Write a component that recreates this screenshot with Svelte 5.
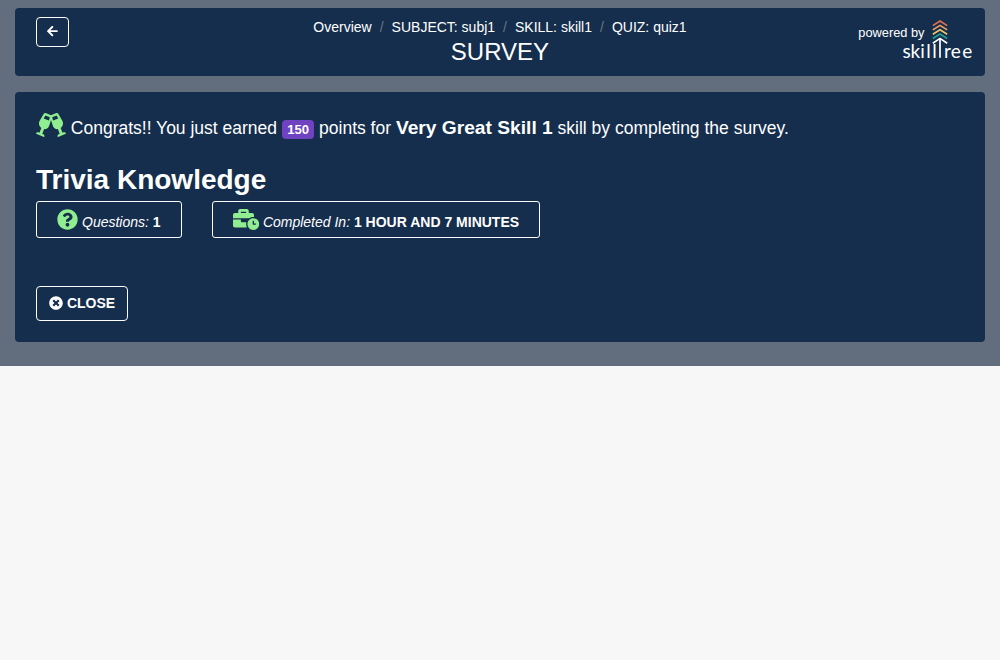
<script>
  const crumbs = ['Overview', 'SUBJECT: subj1', 'SKILL: skill1', 'QUIZ: quiz1'];
  const chevrons = ['#e76f51', '#f4a261', '#e9c46a', '#2a9d8f'];
  const icons = {
    back: [448, 'M257.5 445.1l-22.2 22.2c-9.4 9.4-24.6 9.4-33.9 0L7 273c-9.4-9.4-9.4-24.6 0-33.9L201.4 44.7c9.4-9.4 24.6-9.4 33.9 0l22.2 22.2c9.5 9.5 9.3 25-.4 34.3L136.6 216H424c13.3 0 24 10.7 24 24v32c0 13.3-10.7 24-24 24H136.6l120.5 114.8c9.8 9.3 10 24.8.4 34.3z'],
    cheers: [640, 'M639.4 433.6c-8.4-20.4-31.8-30.1-52.2-21.6l-22.1 9.2-38.7-101.9c47.9-35 64.8-100.3 34.5-152.8L474.3 16c-8-13.9-25.1-19.7-40-13.6L320 49.8 205.7 2.4c-14.9-6.1-32-.3-40 13.6L79.1 166.5C48.9 219 65.7 284.3 113.6 319.2L74.9 421.1l-22.1-9.2c-20.4-8.5-43.7 1.2-52.2 21.6-1.7 4.1.2 8.8 4.3 10.5l162.3 67.4c4.1 1.7 8.7-.2 10.4-4.3 8.4-20.4-1.4-43.8-21.6-52.3l-22.1-9.1L173 342.7c4.3.5 8.5 1.3 12.7 1.3 41.6 0 80.7-27.9 94.8-71.8L320 149.2l39.5 123c14.2 43.9 53.2 71.8 94.8 71.8 4.3 0 8.5-.8 12.8-1.3l39 102.9-22.1 9.1c-20.4 8.5-30.1 31.9-21.6 52.3 1.7 4.1 6.3 6 10.4 4.3L635.1 444c4-1.7 6-6.3 4.3-10.4zM275.9 162.1l-112.1-46.5 36.5-63.4 94.5 39.2-18.9 70.7zm88.2 0l-18.9-70.7 94.5-39.2 36.5 63.4-112.1 46.5z'],
    question: [512, 'M504 256c0 136.997-111.043 248-248 248S8 392.997 8 256C8 119.083 119.043 8 256 8s248 111.083 248 248zM262.655 90c-54.497 0-89.255 22.957-116.549 63.758-3.536 5.286-2.353 12.415 2.715 16.258l34.699 26.31c5.205 3.947 12.621 3.008 16.665-2.122 17.864-22.658 30.113-35.797 57.303-35.797 20.429 0 45.698 13.148 45.698 32.958 0 14.976-12.363 22.667-32.534 33.976C247.128 238.528 216 254.941 216 296v4c0 6.627 5.373 12 12 12h56c6.627 0 12-5.373 12-12v-1.333c0-28.462 83.186-29.647 83.186-106.667 0-58.002-60.165-102-116.531-102zM256 338c-25.365 0-46 20.635-46 46 0 25.364 20.635 46 46 46s46-20.636 46-46c0-25.365-20.635-46-46-46z'],
    time: [640, 'M496 224c-79.59 0-144 64.41-144 144s64.41 144 144 144 144-64.41 144-144-64.41-144-144-144zm64 150.29c0 5.34-4.37 9.71-9.71 9.71h-60.57c-5.34 0-9.71-4.37-9.71-9.71v-76.57c0-5.34 4.37-9.71 9.71-9.71h12.57c5.34 0 9.71 4.37 9.71 9.71V352h38.29c5.34 0 9.71 4.37 9.71 9.71v12.58zM496 192c5.4 0 10.72.33 16 .81V144c0-25.6-22.4-48-48-48h-80V48c0-25.6-22.4-48-48-48H176c-25.6 0-48 22.4-48 48v48H48c-25.6 0-48 22.4-48 48v80h395.12c28.6-20.09 63.35-32 100.88-32zM320 96H192V64h128v32zm6.82 224H208c-8.84 0-16-7.16-16-16v-48H0v144c0 25.6 22.4 48 48 48h291.43C327.1 423.96 320 396.82 320 368c0-16.66 2.48-32.72 6.82-48z'],
    close: [512, 'M256 8C119 8 8 119 8 256s111 248 248 248 248-111 248-248S393 8 256 8zm121.6 313.1c4.7 4.7 4.7 12.3 0 17L338 377.6c-4.7 4.7-12.3 4.7-17 0L256 312l-65.1 65.6c-4.7 4.7-12.3 4.7-17 0L134.4 338c-4.7-4.7-4.7-12.3 0-17l65.6-65-65.6-65.1c-4.7-4.7-4.7-12.3 0-17l39.6-39.6c4.7-4.7 12.3-4.7 17 0l65 65.7 65.1-65.6c4.7-4.7 12.3-4.7 17 0l39.6 39.6c4.7 4.7 4.7 12.3 0 17L312 256l65.6 65.1z'],
  };
</script>

{#snippet icon(name, size)}
  <svg class="icon" viewBox="0 0 {icons[name][0]} 512" width={(icons[name][0] / 512) * size} height={size} aria-hidden="true">
    <path d={icons[name][1]} />
  </svg>
{/snippet}

<main>
  <header class="panel top">
    <div class="side"><button class="back" aria-label="Back">{@render icon('back', 12.25)}</button></div>
    <div class="center">
      <nav>
        {#each crumbs as crumb, i}
          {#if i}<span class="sep">/</span>{/if}<span>{crumb}</span>
        {/each}
      </nav>
      <h1>SURVEY</h1>
    </div>
    <div class="side brand">
      <span>powered by</span>
      <svg class="logo" width="72" height="42" viewBox="0 0 72 42">
        {#each chevrons as color, i}
          <path d="M32.8 {8.6 + i * 4.3}L40 {4.1 + i * 4.3}l7.2 4.5" stroke={color} />
        {/each}
        <path d="M32.8 26.2L40 21.4l7.2 4.8M40 22v18.7" stroke="#fff" />
        <text x="2.6 10.6 20.3 26.2 32.2" y="40.6">skill</text>
        <text x="44 50.8 62.2" y="40.6">ree</text>
      </svg>
    </div>
  </header>

  <section class="panel body">
    <p class="congrats">
      <span class="green">{@render icon('cheers', 24)}</span><span>Congrats!! You just earned</span>
      <span class="badge">150</span><span>points for <b>Very Great Skill 1</b> skill by completing the survey.</span>
    </p>
    <h2>Trivia Knowledge</h2>
    <div class="cards">
      <div class="card"><span class="green">{@render icon('question', 21)}</span><span class="label"><i>Questions:</i> <b>1</b></span></div>
      <div class="card"><span class="green">{@render icon('time', 21)}</span><span class="label"><i>Completed In:</i> <b>1 HOUR AND 7 MINUTES</b></span></div>
    </div>
    <button class="close">{@render icon('close', 14)}<span>CLOSE</span></button>
  </section>
</main>

<style>
  :global(body) {
    margin: 0;
    background: #f7f7f7;
    font-family: "Liberation Sans", Arial, sans-serif;
    font-size: 14px;
    color: #fff;
  }
  main {
    box-sizing: border-box;
    height: 366px;
    padding: 8px 15px 24px;
    background: #626d7d;
    display: flex;
    flex-direction: column;
    gap: 16px;
  }
  .panel {
    box-sizing: border-box;
    background: #152e4d;
    border-radius: 4px;
  }
  .top {
    height: 68px;
    display: grid;
    grid-template-columns: 1fr auto 1fr;
    padding: 0 13px 0 21px;
  }
  .side { padding-top: 9px; }
  .center { text-align: center; padding-top: 9px; margin-right: 8px; }
  nav { display: flex; justify-content: center; gap: 8px; line-height: 21px; }
  .sep { color: #6c757d; }
  h1 { margin: 0; font-size: 24px; font-weight: 400; line-height: 28px; }
  button {
    display: flex;
    align-items: center;
    justify-content: center;
    box-sizing: border-box;
    border: 1px solid #fff;
    border-radius: 4px;
    background: transparent;
    color: #fff;
    font: bold 14px "Liberation Sans", Arial, sans-serif;
    padding: 0;
  }
  .back { width: 33px; height: 30px; padding-bottom: 2px; }
  .icon { display: block; fill: currentColor; }
  .green { color: #90ee90; display: block; }
  .brand { display: flex; justify-content: flex-end; font-size: 12.8px; line-height: 15px; }
  .brand > span { padding-top: 8px; margin-right: -24.5px; white-space: nowrap; }
  .logo { flex: none; overflow: visible; }
  .logo path { fill: none; stroke-width: 1.7; }
  .logo text { fill: #fff; font: 19px Lato, sans-serif; }
  .body { height: 250px; padding: 21px; }
  .congrats {
    margin: 0;
    display: flex;
    align-items: flex-start;
    height: 30px;
    font-size: 17.5px;
    line-height: 30px;
    white-space: nowrap;
  }
  .congrats .green { margin-right: 4.8px; }
  .congrats b { font-size: 19.2px; }
  .badge {
    box-sizing: border-box;
    width: 32px;
    height: 19px;
    margin: 7px 5px 0;
    border-radius: 4px;
    background: #6f42c1;
    text-align: center;
    font: bold 13.125px/19px "Liberation Sans", Arial, sans-serif;
  }
  h2 { margin: 20px 0 4px; font-size: 28px; line-height: 34px; }
  .cards { display: flex; gap: 30px; }
  .card {
    box-sizing: border-box;
    height: 37px;
    padding: 7px 20px 0;
    border: 1px solid #fff;
    border-radius: 3px;
    display: flex;
    gap: 4px;
  }
  .label { line-height: 16px; padding-top: 5px; white-space: nowrap; }
  .close { width: 92px; height: 35px; margin-top: 48px; gap: 4px; padding-bottom: 2px; }
</style>
